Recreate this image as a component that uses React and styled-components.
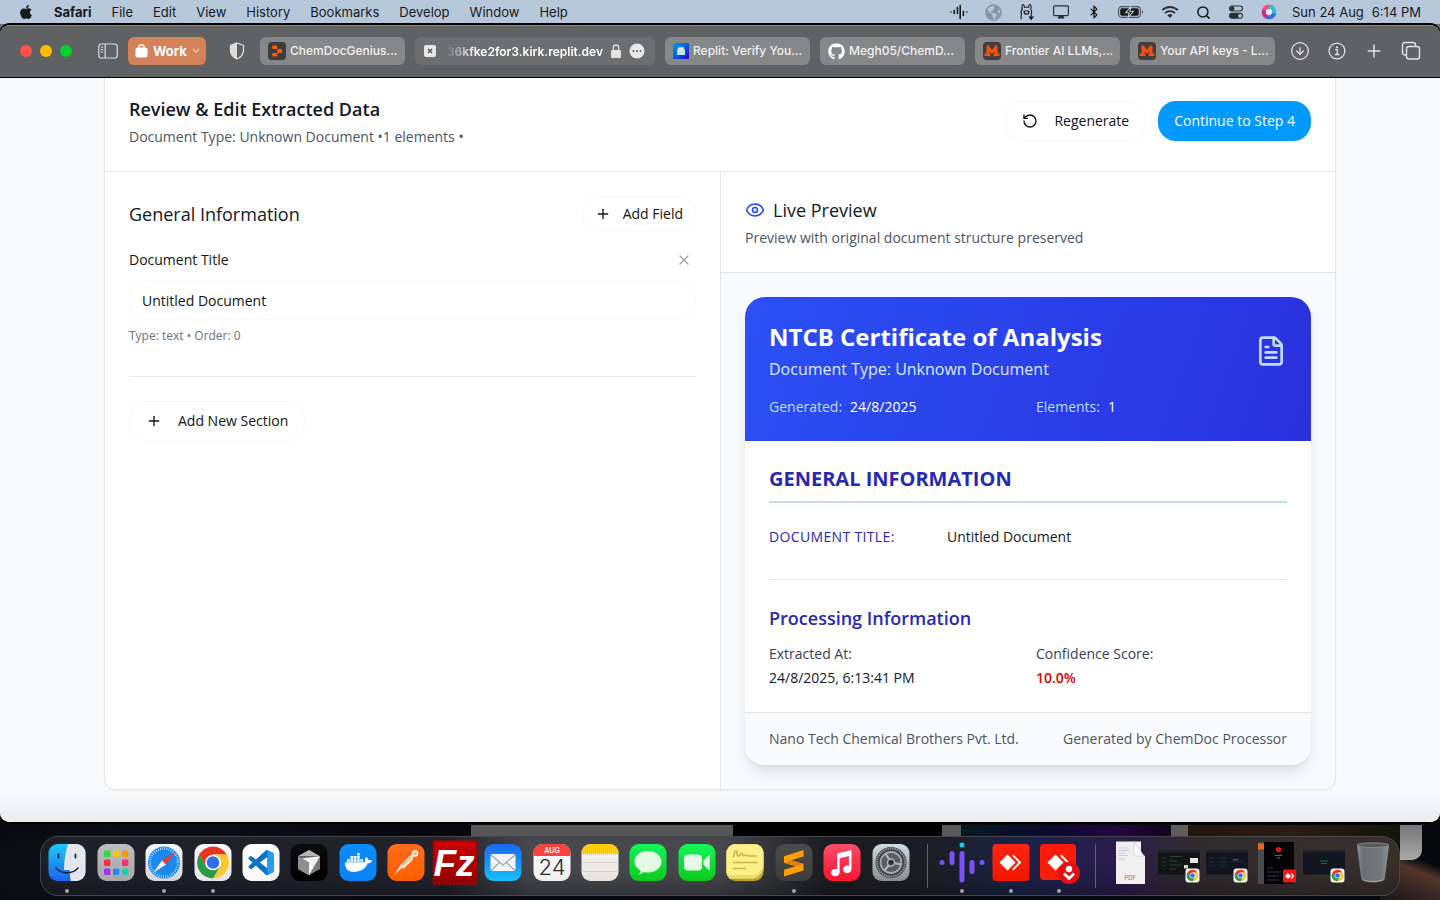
import React from "react";
import styled, { createGlobalStyle, css } from "styled-components";
import { Eye, FileText, Plus, RotateCcw, X, Search, CircleArrowDown, Bluetooth } from "lucide-react";
import { FaApple, FaDocker, FaGithub, FaGlobeAmericas } from "react-icons/fa";

const GlobalStyle = createGlobalStyle`
  *, *::before, *::after { box-sizing: border-box; }
  body { margin: 0; background: #07090f; font-family: "Open Sans", "Noto Sans", sans-serif; }
  h1, h2, h3, p, dl, dd, dt { margin: 0; }
  button, input { font: inherit; color: inherit; margin: 0; }
  button { background: none; border: 0; padding: 0; cursor: pointer; }
  svg { display: block; flex: none; }
`;

const systemFont = `Inter, "Liberation Sans", sans-serif`;

const medium = css`
  font-weight: 500;
  font-variation-settings: "wght" 500;
`;

/* ---------- desktop and menu bar ---------- */

const Desktop = styled.div`
  min-height: 100vh;
  display: flex;
  flex-direction: column;
  background: linear-gradient(#5d7284 0 50px, #07090f 50px);
`;

const MenuBar = styled.header`
  height: 24px;
  padding: 0 19px 0 18px;
  display: flex;
  align-items: center;
  justify-content: space-between;
  background: #b6c8da;
  color: #17191c;
  font-family: ${systemFont};
  font-size: 13px;
  line-height: 16px;
  white-space: nowrap;
`;

const Menus = styled.nav`
  display: flex;
  align-items: center;
  gap: 20px;
`;

const MenuItem = styled.button`
  font-weight: ${(p) => (p.$app ? 700 : 400)};
`;

const StatusItems = styled.div`
  display: flex;
  align-items: center;
  gap: 15px;
`;

const StatusIcons = styled.div`
  display: flex;
  align-items: center;
  gap: 17px;
`;

const Clock = styled.time`
  display: flex;
  gap: 8px;
`;

/* ---------- browser window ---------- */

const Window = styled.div`
  flex: 1 0 auto;
  display: flex;
  flex-direction: column;
  margin-bottom: 1px;
  border-top: 1px solid #000;
  border-bottom: 1px solid #000;
  border-radius: 10px;
  overflow: hidden;
  background: #f9fafb;
  box-shadow: 0 0 0 1px #000, 0 1px 0 #66686b;
`;

const Toolbar = styled.div`
  height: 53px;
  padding: 0 19px 0 20px;
  display: flex;
  align-items: center;
  background: #606163;
  border-bottom: 1px solid #000;
  box-shadow: inset 0 1px 0 #858688;
  font-family: ${systemFont};
  color: #f1f1f1;
`;

const Lights = styled.div`
  display: flex;
  gap: 8px;
  margin-right: 26px;
`;

const Light = styled.button`
  width: 12px;
  height: 12px;
  border-radius: 50%;
  background: ${(p) => p.$color};
`;

const ProfileButton = styled.button`
  display: flex;
  align-items: center;
  gap: 5px;
  width: 78px;
  height: 28px;
  margin: 0 23px 0 10px;
  padding: 0 4px 0 7px;
  border-radius: 6px;
  background: #d4825a;
  color: #fff;
  font-size: 13px;
  font-weight: 700;
  line-height: 16px;
`;

const Tabs = styled.div`
  flex: 1;
  min-width: 0;
  display: flex;
  gap: 10px;
  margin: 0 15px;
`;

const Tab = styled.button`
  flex: 145 1 145px;
  min-width: 0;
  height: 28px;
  padding: 0 8px;
  display: flex;
  align-items: center;
  gap: 4px;
  border-radius: 6px;
  background: #868789;
  font-size: 12px;
  font-weight: 500;
  line-height: 16px;
  white-space: nowrap;
  overflow: hidden;
`;

const Address = styled.label`
  flex: 240 1 240px;
  min-width: 0;
  height: 28px;
  padding: 0 10px 0 9px;
  display: flex;
  align-items: center;
  gap: 8px;
  border-radius: 6px;
  background: #6d6e70;
`;

const AddressInput = styled.input`
  flex: 1;
  min-width: 0;
  height: 20px;
  border: 0;
  padding: 0;
  outline: 0;
  background: none;
  color: #fff;
  font-size: 12px;
  font-weight: 600;
  text-align: right;
  mask-image: linear-gradient(90deg, transparent, #000 32px);
`;

const ToolbarActions = styled.div`
  display: flex;
  gap: 17px;
  color: #e3e3e4;
`;

/* ---------- page ---------- */

const Page = styled.main`
  flex: 1;
  padding: 0 24px 32px;
  background: linear-gradient(to top, #ececee, #f8fafc 32px);
`;

const Sheet = styled.div`
  max-width: 1232px;
  margin: 0 auto;
  border: 1px solid #e5e7eb;
  border-top: 0;
  border-radius: 0 0 12px 12px;
  overflow: hidden;
  background: #fff;
  box-shadow: 0 1px 2px rgba(0, 0, 0, 0.05);
`;

const SheetHeader = styled.div`
  display: flex;
  align-items: center;
  justify-content: space-between;
  padding: 17px 24px 24px;
  border-bottom: 1px solid #e5e7eb;
`;

const Heading = styled.h2`
  display: flex;
  align-items: center;
  gap: 8px;
  color: ${(p) => p.$color || "#111827"};
  font-size: 18px;
  line-height: 28px;
  ${medium}
  ${(p) => p.$strong && css`
    font-weight: 600;
    font-variation-settings: normal;
  `}
`;

const Muted = styled.p`
  margin-top: 4px;
  color: #4b5563;
  font-size: 14px;
  line-height: 20px;
`;

const Medium = styled.span`
  ${medium}
`;

const Actions = styled.div`
  display: flex;
  gap: 12px;
`;

const Button = styled.button`
  display: inline-flex;
  align-items: center;
  justify-content: center;
  gap: 16px;
  height: 40px;
  padding: 0 16px;
  border: 1px solid #f7f7f8;
  border-radius: 18px;
  background: #fff;
  color: #0f1419;
  font-size: 14px;
  line-height: 20px;
  white-space: nowrap;
  ${medium}
  ${(p) => p.$small && css`
    height: 36px;
    padding: 0 12px;
    gap: 12px;
  `}
  ${(p) => p.$primary && css`
    border: 0;
    background: #0099ff;
    color: #fff;
  `}
`;

const Columns = styled.div`
  display: grid;
  grid-template-columns: 1fr 1fr;
`;

const Editor = styled.section`
  padding: 24px;
`;

const Row = styled.div`
  display: flex;
  align-items: center;
  justify-content: space-between;
`;

const Field = styled.div`
  margin-top: 16px;
`;

const FieldLabel = styled.label`
  color: #0f1419;
  font-size: 14px;
  line-height: 20px;
  ${medium}
`;

const RemoveButton = styled.button`
  width: 24px;
  height: 24px;
  display: grid;
  place-items: center;
  color: #9ca3af;
`;

const TextInput = styled.input`
  display: block;
  width: 100%;
  height: 40px;
  margin: 8px 0;
  padding: 0 12px;
  border: 1px solid #f7f7f8;
  border-radius: 18px;
  background: #fff;
  color: #0f1419;
  font-size: 14px;
  line-height: 20px;
`;

const Hint = styled.p`
  color: #6b7280;
  font-size: 12px;
  line-height: 16px;
`;

const Rule = styled.hr`
  margin: 32px 0 24px;
  border: 0;
  border-top: 1px solid #e5e7eb;
`;

const Preview = styled.section`
  border-left: 1px solid #e5e7eb;
  background: #f9fafb;
`;

const PreviewHeader = styled.div`
  padding: 24px;
  border-bottom: 1px solid #e5e7eb;
  background: #fff;
`;

const Certificate = styled.article`
  margin: 24px;
  border-radius: 20px;
  overflow: hidden;
  background: #fff;
  font-size: 14px;
  line-height: 20px;
  box-shadow: 0 10px 15px -3px rgba(0, 0, 0, 0.1), 0 4px 6px -4px rgba(0, 0, 0, 0.1);
`;

const Hero = styled.header`
  padding: 24px;
  background: linear-gradient(110deg, #2b50f5, #2931dd);
  color: #fff;
`;

const HeroTitle = styled.h1`
  font-size: 24px;
  line-height: 32px;
  font-weight: 700;
`;

const HeroSubtitle = styled.p`
  margin-top: 4px;
  color: #dbeafe;
  font-size: 16px;
  line-height: 24px;
`;

const TwoColumns = styled.dl`
  display: grid;
  grid-template-columns: 1fr 1fr;
  gap: 16px;
  margin-top: ${(p) => p.$top}px;
`;

const HeroFact = styled.div`
  display: flex;
  gap: 8px;
  dt { color: #bfdbfe; }
`;

const CertificateBody = styled.div`
  padding: 24px;
`;

const SectionTitle = styled.h2`
  padding-bottom: 8px;
  border-bottom: 2px solid #bfdbfe;
  color: #2629b3;
  font-size: 20px;
  line-height: 28px;
  font-weight: 700;
  text-transform: uppercase;
`;

const DataRow = styled.dl`
  display: grid;
  grid-template-columns: repeat(3, 1fr);
  gap: 16px;
  margin-top: 24px;
  ${medium}
  dt { color: #2629b3; text-transform: uppercase; letter-spacing: 0.025em; white-space: nowrap; }
  dd { grid-column: span 2; color: #111827; }
`;

const InfoItem = styled.div`
  dt { color: #374151; ${medium} }
  dd {
    margin-top: 4px;
    color: ${(p) => (p.$alert ? "#e00000" : "#111827")};
    font-weight: ${(p) => (p.$alert ? 600 : 400)};
  }
`;

const CertificateFooter = styled.footer`
  display: flex;
  justify-content: space-between;
  padding: 16px 24px;
  border-top: 1px solid #e5e7eb;
  background: #f9fafb;
  color: #4b5563;
`;

/* ---------- dock ---------- */

const DockArea = styled.div`
  position: relative;
  padding: 12px 40px 4px;
  background:
    radial-gradient(ellipse 260px 60px at 12% 60%, #11161b, transparent),
    linear-gradient(200deg, transparent 0 40px, #53352c 52px, #1c1518 90px, transparent 130px) right / 60px 100% no-repeat,
    #06080e;
`;

const Behind = styled.div`
  position: absolute;
  inset: 1px 0 auto;
  height: 35px;
  display: flex;
  align-items: flex-start;
  padding: 0 18px 0 471px;
`;

const Slice = styled.span`
  flex: ${(p) => p.$w} 1 0;
  height: ${(p) => p.$h || 20}px;
  background: ${(p) => p.$bg};
  border-radius: ${(p) => (p.$h ? "0 0 10px 0" : "0")};
`;

const DockBar = styled.footer`
  position: relative;
  height: 60px;
  padding: 2px;
  display: flex;
  border: 1px solid #45474d;
  border-radius: 18px;
  background: linear-gradient(90deg, #1d2029 0, #20232a 30%, #46484d 36%, #46484d 50%, #1b1c20 58%, #1c1e25 66%, #19244a 72%, #2a1c4c 79%, #2f2b2d 85%, #3a302b 100%);
  box-shadow: inset 0 -24px 20px -16px rgba(12, 14, 20, 0.45);
`;

const DockSlot = styled.button`
  flex: 1;
  min-width: 0;
  display: flex;
  flex-direction: column;
  align-items: center;
`;

const RunningDot = styled.i`
  width: 4px;
  height: 4px;
  margin-top: 2px;
  border-radius: 50%;
  background: ${(p) => (p.$on ? "#a3a5aa" : "transparent")};
`;

const DockDivider = styled.span`
  width: 1px;
  height: 44px;
  margin: 5px 10px 0 12px;
  background: #62646a;
`;

/* ---------- small drawings ---------- */

const replitLogo = (
  <svg width="18" height="18" viewBox="0 0 18 18">
    <rect width="18" height="18" rx="4" fill="#3c3c3c" />
    <path d="M5 3.500h3.500a.8.8 0 0 1 .8.8v2.800H5a.8.8 0 0 1-.8-.8v-2a.8.8 0 0 1 .8-.8zM9.300 7.100h3.900a.9.9 0 0 1 .9.9v2a.9.9 0 0 1-.9.9H9.300zM5 10.900h4.300v2.800a.8.8 0 0 1-.8.8H5a.8.8 0 0 1-.8-.8v-2a.8.8 0 0 1 .8-.8z" fill="#ff5a00" />
  </svg>
);

const mistralLogo = (
  <svg width="18" height="18" viewBox="0 0 18 18">
    <rect width="18" height="18" rx="4" fill="#403e3d" />
    <path d="M3.500 3.500h3v2h1.500v2h2v-2h1.500v-2h3v8h2v2.500h-6v-2.500h1v-2h-1v1.500h-3v-1.500h-1v2h1v2.500h-6v-2.500h2z" fill="#fa500f" />
  </svg>
);

const mailLogo = (
  <svg width="16" height="16" viewBox="0 0 16 16">
    <defs>
      <linearGradient id="tabBlue" x1="0" y1="0" x2="1" y2="1">
        <stop stopColor="#009af5" /><stop offset="0.5" stopColor="#0060e6" /><stop offset="1" stopColor="#3300b8" />
      </linearGradient>
    </defs>
    <rect width="16" height="16" fill="url(#tabBlue)" />
    <path d="M4 7l1.500-3h5L12 7v5H4z" fill="#8fd4ec" />
    <path d="M5.500 8V4.800h5V8z" fill="#ffdcb5" />
    <path d="M4 8h8v4H4z" fill="#b5e5f2" />
  </svg>
);

const sidebarIcon = (
  <svg width="20" height="16" viewBox="0 0 20 16" fill="none" stroke="#dcdcdd" strokeWidth="1.200">
    <rect x="0.800" y="1" width="18.400" height="14" rx="2.500" />
    <path d="M7.200 1v14M2.800 4h2.400M2.800 6.500h2.400M2.800 9h2.400" />
  </svg>
);

const displayIcon = (
  <svg width="18" height="16" viewBox="0 0 18 16">
    <rect x="1.600" y="1.900" width="14.800" height="9.800" rx="1.200" fill="none" stroke="#2b3036" strokeWidth="1.200" />
    <path d="M6.500 12h5l1 2.500h-7z" fill="#2b3036" />
  </svg>
);

const wifiIcon = (
  <svg width="18" height="14" viewBox="0 0 18 14" fill="none" stroke="#2b3036" strokeWidth="1.900">
    <path d="M1.200 5.200a11 11 0 0 1 15.600 0M4 8.200a7 7 0 0 1 10 0" />
    <path d="M9 13l-2.600-2.700a3.600 3.600 0 0 1 5.200 0z" fill="#2b3036" stroke="none" />
  </svg>
);

const batteryIcon = (
  <svg width="26" height="12" viewBox="0 0 26 12">
    <rect x="0.600" y="0.600" width="21.800" height="10.800" rx="3.200" fill="none" stroke="#4c545d" strokeWidth="1.100" />
    <rect x="2.200" y="2.200" width="18.600" height="7.600" rx="1.800" fill="#17191c" />
    <path d="M24 4.200v3.600c1.600-.6 1.600-3 0-3.600z" fill="#4c545d" />
    <path d="M13 .4L7.800 6.700h3.400L10 11.600l5.400-6.300h-3.500z" fill="#17191c" stroke="#b6c8da" strokeWidth="1.100" />
  </svg>
);

const controlIcon = (
  <svg width="16" height="14" viewBox="0 0 16 14">
    <rect x="1.500" y="1" width="13" height="5" rx="2.500" fill="none" stroke="#2b3036" strokeWidth="1.200" />
    <circle cx="4.300" cy="3.500" r="2.200" fill="#2b3036" />
    <rect x="1" y="7.800" width="14" height="6" rx="3" fill="#2b3036" />
    <circle cx="12" cy="10.800" r="1.900" fill="#b6c8da" />
  </svg>
);

const siriIcon = (
  <svg width="16" height="16" viewBox="0 0 16 16">
    <circle cx="8" cy="8" r="7.200" fill="#5c3a93" />
    <path d="M8 .8a7.200 7.200 0 0 1 6.800 9.400L8 8z" fill="#2cc5cf" />
    <path d="M1.200 6A7.200 7.200 0 0 1 8 .8V8z" fill="#f0507e" />
    <path d="M14.800 10.200A7.200 7.200 0 0 1 5 14.500L8 8z" fill="#3172e0" />
    <path d="M1.200 6l6.800 2-3 6.500A7.200 7.200 0 0 1 1.200 6z" fill="#c72d8d" />
    <circle cx="8" cy="8" r="3.200" fill="#f4f3fa" opacity="0.9" />
  </svg>
);

const ollamaIcon = (
  <svg width="16" height="18" viewBox="0 0 16 18" fill="none" stroke="#17191c" strokeWidth="1.100" strokeLinecap="round">
    <path d="M3.200 6.300C2.700 4 3 1.500 4 1.500S5.300 3 5.300 4.300h4.400C9.700 3 10 1.500 11 1.500s1.300 2.500.8 4.800c1.200 1.200 1.200 2.700.6 4.200" />
    <path d="M3.200 6.300C1.800 7.500 1.800 9.300 2.600 10.800 1.800 12.500 1.800 14.500 2.300 16M4.700 8.500h.1M10.200 8.500h.1" />
    <ellipse cx="7.500" cy="9.400" rx="2.300" ry="1.700" />
    <path d="M12.200 11v4.500M10.400 14l1.800 2.300 1.800-2.300z" fill="#17191c" />
  </svg>
);

const waveIcon = (
  <svg width="18" height="16" viewBox="0 0 18 16" stroke="#17191c" strokeWidth="1.600" strokeLinecap="round">
    <path d="M1 8v.01M4.200 6.500v3M7.400 3.500v6M10.200 1.500v13M13.400 7.500v4M17 8v.01" />
  </svg>
);

function ChromeMark({ cx, cy, r }) {
  const arm = "M-8.660-5A10 10 0 0 1 8.660-5L0-5L-4.330 2.500Z";
  return (
    <g transform={`translate(${cx} ${cy}) scale(${r / 10})`}>
      <path d={arm} fill="#ea3323" />
      <path d={arm} fill="#fcc934" transform="rotate(120)" />
      <path d={arm} fill="#2a9a46" transform="rotate(240)" />
      <circle r="4.900" fill="#fff" />
      <circle r="3.900" fill="#2b70e8" />
    </g>
  );
}

/* Every dock tile is drawn on a 48px board with a 37px rounded square. */
function Tile({ id, from, to, rx = 9, children }) {
  return (
    <svg width="48" height="48" viewBox="0 0 48 48">
      <defs>
        <linearGradient id={id} x1="0" y1="0" x2="0" y2="1">
          <stop stopColor={from} /><stop offset="1" stopColor={to} />
        </linearGradient>
        <clipPath id={`${id}Clip`}><rect x="5.500" y="5" width="37" height="37" rx={rx} /></clipPath>
      </defs>
      <g clipPath={`url(#${id}Clip)`}>
        <rect x="5" y="5" width="38" height="38" fill={`url(#${id})`} />
        {children}
      </g>
    </svg>
  );
}

const finder = (
  <Tile id="finder" from="#1cc8fb" to="#1a62f2">
    <path d="M25 5h18v38H28c-1-5-1.400-9-1.300-12H21c0-10 1.500-18 4-26z" fill="#e2e6ee" />
    <path d="M15.500 15.500v3M32.500 15.500v3" stroke="#1d2634" strokeWidth="1.800" strokeLinecap="round" />
    <path d="M13 29c6 6.500 16 6.500 22 0" fill="none" stroke="#1d2634" strokeWidth="1.600" strokeLinecap="round" />
  </Tile>
);

const padColors = ["#2bdd3c", "#fdc60a", "#ff9500", "#f1303a", "#a9b0b6", "#fb2d6d", "#a830e8", "#2488ff", "#18cfae"];
const launchpad = (
  <Tile id="launchpad" from="#bdbdc1" to="#a6a6ab">
    {padColors.map((c, i) => (
      <rect key={c} x={12 + (i % 3) * 9} y={11.5 + Math.floor(i / 3) * 9} width="6.400" height="6.400" rx="1.500" fill={c} />
    ))}
  </Tile>
);

const safari = (
  <Tile id="safari" from="#f7f7f8" to="#d3d4d8">
    <circle cx="24" cy="23.500" r="16" fill="#1b88ee" />
    <circle cx="24" cy="23.500" r="14" fill="none" stroke="#d9ecff" strokeWidth="2.400" strokeDasharray="0.700 1.500" />
    <path d="M35 13L26 25.500 22 21.500z" fill="#f0372b" />
    <path d="M13 34l9-12.500 4 4z" fill="#f3f4f6" />
  </Tile>
);

const chrome = <Tile id="chrome" from="#fafafa" to="#e5e5e7"><ChromeMark cx={24} cy={23.5} r={16} /></Tile>;

const vscode = (
  <Tile id="vscode" from="#ffffff" to="#f8f8f8">
    <g transform="translate(11.500 11) scale(1.050)">
      <path d="M23.150 2.587L18.210.21a1.494 1.494 0 0 0-1.705.29l-9.460 8.630-4.120-3.128a.999.999 0 0 0-1.276.057L.327 7.261A1 1 0 0 0 .326 8.740L3.899 12 .326 15.260a1 1 0 0 0 .001 1.479L1.650 17.940a.999.999 0 0 0 1.276.057l4.120-3.128 9.460 8.630a1.492 1.492 0 0 0 1.704.290l4.942-2.377A1.500 1.500 0 0 0 24 20.060V3.939a1.500 1.500 0 0 0-.850-1.352zm-5.146 14.861L10.826 12l7.178-5.448v10.896z" fill="#0b72c4" />
      <path d="M18 0.150l5.150 2.437A1.500 1.500 0 0 1 24 3.940v16.120a1.500 1.500 0 0 1-.850 1.350L18 23.850z" fill="#2a9bea" />
    </g>
  </Tile>
);

const cursor = (
  <Tile id="cursor" from="#0b0b0b" to="#000000">
    <path d="M24 11l11 6.300v12.600L24 36.200l-11-6.300V17.300z" fill="#77787a" />
    <path d="M24 11l11 6.300H13z" fill="#b5b6b8" />
    <path d="M13 17.300h22L24 23.600z" fill="#5c5d60" />
    <path d="M13 17.300L24 23.600v12.600l-11-6.300z" fill="#8d8e91" />
    <path d="M35 17.300L24 36.200V23.600l-7-4.300z" fill="#f2f2f2" />
  </Tile>
);

const docker = <Tile id="docker" from="#0a8cff" to="#0a82f5"><FaDocker x="11" y="10" size="27" color="#fff" /></Tile>;

const postman = (
  <Tile id="postman" from="#ff6c1c" to="#ff5c00">
    <circle cx="33" cy="14.500" r="2.600" fill="#ffb58a" stroke="#fff" strokeWidth="1.300" />
    <path d="M31.500 17l-3-1L18 26.500l-5.500 9L20 29l1.800.8 8.700-8.800z" fill="#ffe4d3" />
    <path d="M19.500 27l9.500-8.500" stroke="#ff8a4d" strokeWidth="1" />
  </Tile>
);

const filezilla = (
  <svg width="48" height="48" viewBox="0 0 48 48">
    <defs>
      <linearGradient id="fz" x1="0" y1="0" x2="0" y2="1"><stop stopColor="#cf0000" /><stop offset="1" stopColor="#8e0000" /></linearGradient>
    </defs>
    <rect x="2.500" y="2" width="43" height="43" fill="url(#fz)" stroke="#b00000" strokeWidth="2" strokeDasharray="2 1.600" />
    <text x="23" y="37" fill="#fff" textAnchor="middle" fontFamily="Liberation Sans, sans-serif" fontWeight="700" fontStyle="italic" fontSize="37">Fz</text>
  </svg>
);

const mail = (
  <Tile id="mail" from="#1d66f2" to="#19c2fb">
    <rect x="11.500" y="15" width="25" height="17" rx="2" fill="#f1f3f5" />
    <path d="M12 16l12 10 12-10M12 31.500l9-8.500M36 31.500L27 23" fill="none" stroke="#9aa5b0" strokeWidth="1.100" />
  </Tile>
);

const calendar = (
  <Tile id="calendar" from="#ffffff" to="#efefef">
    <rect x="5" y="5" width="38" height="12" fill="#f9443d" />
    <text x="24" y="14" fill="#fff" textAnchor="middle" fontFamily={systemFont} fontWeight="600" fontSize="7">AUG</text>
    <text x="24" y="36" fill="#2b2b2b" textAnchor="middle" fontFamily={systemFont} fontWeight="300" fontSize="22">24</text>
  </Tile>
);

const notes = (
  <Tile id="notes" from="#f8f7f4" to="#e7e2dc">
    <rect x="5" y="5" width="38" height="9.500" fill="#fccb0a" />
    <path d="M5 15h38" stroke="#b8a878" strokeWidth="1" strokeDasharray="1 1" />
    <path d="M5 23.500h38M5 32.500h38" stroke="#cfcac5" strokeWidth="0.800" />
  </Tile>
);

const messages = (
  <Tile id="messages" from="#14f55a" to="#0cc81c">
    <path d="M24 12c7.600 0 13.500 4.700 13.500 10.800S31.600 33.600 24 33.600c-1.600 0-3.200-.2-4.600-.6-1.200 1.200-2.800 2-4.600 2.200 1.200-1 1.800-2.400 1.800-3.600-3.600-2-6.100-5.100-6.100-8.800C10.500 16.700 16.400 12 24 12z" fill="#e2f9e4" />
  </Tile>
);

const facetime = (
  <Tile id="facetime" from="#14f55a" to="#0cc81c">
    <rect x="11" y="15.500" width="18" height="16" rx="4" fill="#e6faea" />
    <path d="M30.500 21.500l5-5c.7-.5 1.200-.2 1.200.6v13c0 .8-.5 1.100-1.200.6l-5-5z" fill="#e6faea" />
  </Tile>
);

const stickies = (
  <Tile id="stickies" from="#e4cf48" to="#bfa526">
    <path d="M5 5h38v25c-2 5-6 9-11 10H5z" fill="#f1e272" stroke="#a8952c" strokeWidth="0.600" />
    <path d="M5 5h38v21c-1 6-6 11-12 11H5z" fill="#fbf089" stroke="#c4b043" strokeWidth="0.500" />
    <path d="M12.500 18c1-7 3.500-8 3.500-4s2 4 3.500 1 2 3 4 1.500 2 .5 3.500.5h8.500M12.500 23.500h23.500M12.500 29.500h12" fill="none" stroke="#cdb748" strokeWidth="1.600" strokeLinecap="round" />
  </Tile>
);

const sublime = (
  <Tile id="sublime" from="#4b4b4b" to="#3c3c3c">
    <path d="M33.500 11v6.600l-12 3.700 12 3.700v6.500L14 37.500v-6.800l11.500-3.500L14 23.800v-6.600z" fill="#ff9d0a" />
    <path d="M14 23.800l11.500 3.400 8-2.200-12-3.700z" fill="#e37f00" />
  </Tile>
);

const music = (
  <Tile id="music" from="#fb4e69" to="#fa1230">
    <path d="M19 14.500L33.500 11v19.500a4.300 3.700 0 1 1-2.600-3.600V17l-9.300 2.300v14.400a4.300 3.700 0 1 1-2.600-3.600z" fill="#fff" />
  </Tile>
);

const settings = (
  <Tile id="settings" from="#cddce4" to="#8b8a8a">
    <circle cx="24" cy="23.500" r="15.500" fill="#3d3f42" />
    <circle cx="24" cy="23.500" r="14" fill="none" stroke="#8f9396" strokeWidth="2" strokeDasharray="1.500 0.800" />
    <circle cx="24" cy="23.500" r="10.500" fill="#5a5d60" stroke="#a5a9ab" strokeWidth="1.800" />
    <path d="M24 23.500l10 2M24 23.500l-5.500-9M24 23.500l-6.500 8" stroke="#b3b7b9" strokeWidth="2.200" />
    <circle cx="24" cy="23.500" r="3.500" fill="#2f3133" stroke="#b3b7b9" strokeWidth="1.500" />
  </Tile>
);

const voice = (
  <svg width="48" height="48" viewBox="0 0 48 48" strokeWidth="5" strokeLinecap="round" stroke="#7d52f4">
    <path d="M4 23.500v.01M14 14.500v9M24 14.500v26.500M34 23.500v9M44 23.500v.01" />
    <path d="M24 6v.01" stroke="#13cfe0" />
  </svg>
);

const anydeskMark = (
  <g>
    <path d="M20.500 15.500l8 8-8 8-8-8z" fill="#fff" />
    <path d="M25.500 16.500l7 7-7 7" fill="none" stroke="#fff" strokeWidth="2.600" />
    <path d="M23.800 16.500l7 7-7 7" fill="none" stroke="#fb1c0a" strokeWidth="1.200" />
  </g>
);

const anydesk = <Tile id="anydesk" from="#ff2412" to="#f51500" rx={4}>{anydeskMark}</Tile>;

const anydeskDownload = (
  <svg width="48" height="48" viewBox="0 0 48 48">
    <rect x="5" y="5" width="36" height="36" rx="4" fill="#fb1c0a" />
    {anydeskMark}
    <circle cx="34" cy="34" r="11" fill="#e30f12" />
    <circle cx="34" cy="30" r="3.200" fill="#fff" />
    <path d="M29 34.500l5 5 5-5" fill="none" stroke="#fff" strokeWidth="2.800" />
  </svg>
);

const pdf = (
  <svg width="48" height="48" viewBox="0 0 48 48">
    <path d="M10 2.500h25v12l4 2.500v28H10z" fill="#f0f0f0" />
    <path d="M28 2.500L38 17h-8q-2 0-2-2z" fill="#fbfbfb" stroke="#c8c8ca" strokeWidth="0.600" />
    <path d="M12 9h10M12 11.500h12M12 14h8M12 16.500h10" stroke="#b9bcd6" strokeWidth="0.700" />
    <path d="M12 20h7" stroke="#e6a3a3" strokeWidth="0.700" />
    <text x="24" y="41" fill="#8d8d8f" textAnchor="middle" fontFamily={systemFont} fontWeight="500" fontSize="6">PDF</text>
  </svg>
);

function MiniWindow({ variant }) {
  return (
    <svg width="48" height="48" viewBox="0 0 48 48">
      <rect x="3" y="11.500" width="42" height="24" fill={variant === "page" ? "#111514" : "#10151f"} />
      <path d="M3 12.500h42" stroke="#20232a" strokeWidth="2" />
      {variant === "page" && (
        <g>
          <path d="M7 19h4M15 17.500h12M7 23h4M14 22h8M15 26h12M7 27h4M15 30h6" stroke="#333b39" />
          <rect x="35" y="19" width="8" height="5" fill="#e8e8e8" />
          <rect x="29" y="26" width="4" height="3.500" fill="#d8d8c8" />
        </g>
      )}
      {variant === "code" && <path d="M6 19h5M16 19h9M6 23h4M16 23h8M29 22h12M6 27h5M16 27h7" stroke="#29303d" />}
      {variant === "code" && <path d="M30 20.500h5" stroke="#1e7a46" strokeWidth="1.200" />}
      {variant === "centre" && <path d="M20 22h8M21 24.500h6" stroke="#1e6a40" strokeWidth="1.200" />}
      <rect x="30.500" y="29.500" width="14" height="14" rx="3" fill="#f5f5f5" />
      <ChromeMark cx={37.5} cy={36.5} r={5.8} />
    </svg>
  );
}

const phoneWindow = (
  <svg width="48" height="48" viewBox="0 0 48 48">
    <rect x="6" y="3" width="36" height="42" fill="#030303" />
    <rect x="6" y="3" width="6" height="42" fill="#4a4b4e" />
    <rect x="6" y="4.500" width="6" height="6" fill="#f0641e" />
    <circle cx="26.500" cy="10.500" r="2.600" fill="#e11" />
    <path d="M23 16.500h7M25 19h3" stroke="#6a6a6a" />
    <path d="M15 29h6M15 33h14M15 37h12M15 41h12" stroke="#2c3a52" />
    <rect x="31" y="30.500" width="13" height="13" rx="1" fill="#f01a10" />
    <path d="M36 34l3 3-3 3-3-3z" fill="#fff" /><path d="M39 34.500l2.500 2.500-2.500 2.500" fill="none" stroke="#fff" strokeWidth="1.200" />
  </svg>
);

const trash = (
  <svg width="48" height="48" viewBox="0 0 48 48">
    <defs>
      <linearGradient id="trashBody" x1="0" y1="0" x2="1" y2="0">
        <stop stopColor="#8b9094" /><stop offset="0.2" stopColor="#6a6f73" /><stop offset="0.75" stopColor="#73787c" /><stop offset="1" stopColor="#8e9397" />
      </linearGradient>
    </defs>
    <path d="M8 6.500l4.300 33.500c.6 4.600 22.800 4.600 23.400 0L40 6.500z" fill="url(#trashBody)" />
    <ellipse cx="24" cy="6.200" rx="16" ry="2.400" fill="#565b5f" stroke="#8f9498" strokeWidth="0.800" />
    <path d="M14 40.500c4 2.600 16 2.600 20 0" fill="none" stroke="#a7acb0" strokeWidth="0.900" />
  </svg>
);

const dockGroups = [
  [
    ["Finder", finder, true], ["Launchpad", launchpad], ["Safari", safari, true], ["Chrome", chrome, true],
    ["Visual Studio Code", vscode], ["Cursor", cursor], ["Docker", docker], ["Postman", postman],
    ["FileZilla", filezilla], ["Mail", mail], ["Calendar", calendar], ["Notes", notes], ["Messages", messages],
    ["FaceTime", facetime], ["Stickies", stickies], ["Sublime Text", sublime, true], ["Music", music], ["System Settings", settings],
  ],
  [["Voice", voice, true], ["AnyDesk", anydesk, true], ["AnyDesk Service", anydeskDownload, true]],
  [
    ["PDF document", pdf], ["Chrome window", <MiniWindow variant="page" />], ["Chrome code window", <MiniWindow variant="code" />],
    ["AnyDesk window", phoneWindow], ["Chrome start window", <MiniWindow variant="centre" />], ["Trash", trash],
  ],
];

const menuNames = ["File", "Edit", "View", "History", "Bookmarks", "Develop", "Window", "Help"];

export default function App() {
  return (
    <Desktop>
      <GlobalStyle />
      <MenuBar>
        <Menus>
          <FaApple size={16} />
          <MenuItem $app>Safari</MenuItem>
          {menuNames.map((name) => <MenuItem key={name}>{name}</MenuItem>)}
        </Menus>
        <StatusItems>
          <StatusIcons>
            {waveIcon}
            <FaGlobeAmericas size={17} color="#8796a5" />
            {ollamaIcon}
            {displayIcon}
            <Bluetooth size={14} strokeWidth={2.2} />
            {batteryIcon}
            {wifiIcon}
            <Search size={15} strokeWidth={2.4} />
            {controlIcon}
            {siriIcon}
          </StatusIcons>
          <Clock><span>Sun 24 Aug</span><span>6:14 PM</span></Clock>
        </StatusItems>
      </MenuBar>

      <Window>
        <Toolbar>
          <Lights>
            <Light aria-label="Close" $color="#ff5148" />
            <Light aria-label="Minimise" $color="#ffbd00" />
            <Light aria-label="Zoom" $color="#00d22e" />
          </Lights>
          {sidebarIcon}
          <ProfileButton>
            <svg width="13" height="14" viewBox="0 0 13 14">
              <rect x="0.500" y="3.500" width="12" height="10" rx="2" fill="#fff" />
              <path d="M4 4V2.500Q4 1 5.500 1h2Q9 1 9 2.500V4" fill="none" stroke="#fff" strokeWidth="1.300" />
            </svg>
            Work
            <svg width="8" height="6" viewBox="0 0 8 6"><path d="M1 1l3 3 3-3" fill="none" stroke="#efc7b3" strokeWidth="1.300" /></svg>
          </ProfileButton>
          <svg width="16" height="18" viewBox="0 0 16 18">
            <path d="M8 1l6.500 2.400v5.200c0 4-2.600 6.600-6.500 8.400-3.900-1.800-6.500-4.400-6.500-8.400V3.400z" fill="none" stroke="#dededf" strokeWidth="1.300" />
            <path d="M8 1v16C4.100 15.200 1.500 12.600 1.500 8.600V3.400z" fill="#dededf" />
          </svg>
          <Tabs>
            <Tab>{replitLogo}ChemDocGenius...</Tab>
            <Address>
              <svg width="12" height="12" viewBox="0 0 12 12">
                <rect width="12" height="12" rx="2" fill="#e6e6e7" />
                <path d="M4 4l4 4M8 4l-4 4" stroke="#5b5c5e" strokeWidth="1.600" />
              </svg>
              <AddressInput aria-label="Address" defaultValue="36kfke2for3.kirk.replit.dev" />
              <svg width="10" height="14" viewBox="0 0 10 14">
                <rect y="6" width="10" height="8" rx="1.500" fill="#e3e3e4" />
                <path d="M2.200 6V3.800a2.800 2.800 0 0 1 5.600 0V6" fill="none" stroke="#e3e3e4" strokeWidth="1.300" />
              </svg>
              <svg width="16" height="16" viewBox="0 0 16 16">
                <circle cx="8" cy="8" r="7.500" fill="#e9e9ea" />
                <path d="M4.500 8v.01M8 8v.01M11.500 8v.01" stroke="#5b5c5e" strokeWidth="2" strokeLinecap="round" />
              </svg>
            </Address>
            <Tab>{mailLogo}Replit: Verify You...</Tab>
            <Tab><FaGithub size={17} color="#fff" />Megh05/ChemD...</Tab>
            <Tab>{mistralLogo}Frontier AI LLMs,...</Tab>
            <Tab>{mistralLogo}Your API keys - L...</Tab>
          </Tabs>
          <ToolbarActions>
            <button aria-label="Downloads"><CircleArrowDown size={20} strokeWidth={1.5} /></button>
            <button aria-label="Page info">
              <svg width="20" height="20" viewBox="0 0 20 20" fill="none" stroke="currentColor" strokeWidth="1.300">
                <circle cx="10" cy="10" r="7.900" />
                <path d="M8.300 8.700H10.200V13.500M8 13.500h4.400" />
                <circle cx="10" cy="6.300" r="1.100" fill="currentColor" stroke="none" />
              </svg>
            </button>
            <button aria-label="New tab"><Plus size={20} strokeWidth={1.8} /></button>
            <button aria-label="Tab overview">
              <svg width="20" height="20" viewBox="0 0 20 20" fill="none" stroke="currentColor" strokeWidth="1.400">
                <rect x="5.500" y="5.500" width="13" height="12.500" rx="2.500" />
                <path d="M5.500 14H4a2.500 2.500 0 0 1-2.500-2.500V4A2.500 2.500 0 0 1 4 1.500h8A2.500 2.500 0 0 1 14.500 4v1.500" />
              </svg>
            </button>
          </ToolbarActions>
        </Toolbar>

        <Page>
          <Sheet>
            <SheetHeader>
              <div>
                <Heading $strong>Review &amp; Edit Extracted Data</Heading>
                <Muted>Document Type: <Medium>Unknown Document</Medium> •1 elements •</Muted>
              </div>
              <Actions>
                <Button><RotateCcw size={16} />Regenerate</Button>
                <Button $primary>Continue to Step 4</Button>
              </Actions>
            </SheetHeader>
            <Columns>
              <Editor>
                <Row>
                  <Heading>General Information</Heading>
                  <Button $small><Plus size={16} />Add Field</Button>
                </Row>
                <Field>
                  <Row>
                    <FieldLabel htmlFor="doc-title">Document Title</FieldLabel>
                    <RemoveButton aria-label="Remove field"><X size={16} /></RemoveButton>
                  </Row>
                  <TextInput id="doc-title" type="text" defaultValue="Untitled Document" />
                  <Hint>Type: text • Order: 0</Hint>
                </Field>
                <Rule />
                <Button><Plus size={16} />Add New Section</Button>
              </Editor>
              <Preview>
                <PreviewHeader>
                  <Heading><Eye size={20} color="#2b4ff0" />Live Preview</Heading>
                  <Muted>Preview with original document structure preserved</Muted>
                </PreviewHeader>
                <Certificate>
                  <Hero>
                    <Row>
                      <div>
                        <HeroTitle>NTCB Certificate of Analysis</HeroTitle>
                        <HeroSubtitle>Document Type: Unknown Document</HeroSubtitle>
                      </div>
                      <FileText size={32} color="#bfdbfe" />
                    </Row>
                    <TwoColumns $top={16}>
                      <HeroFact><dt>Generated:</dt><dd>24/8/2025</dd></HeroFact>
                      <HeroFact><dt>Elements:</dt><dd>1</dd></HeroFact>
                    </TwoColumns>
                  </Hero>
                  <CertificateBody>
                    <SectionTitle>General Information</SectionTitle>
                    <DataRow><dt>Document Title:</dt><dd>Untitled Document</dd></DataRow>
                    <Rule />
                    <Heading as="h3" $color="#2629b3" $strong>Processing Information</Heading>
                    <TwoColumns $top={12}>
                      <InfoItem><dt>Extracted At:</dt><dd>24/8/2025, 6:13:41 PM</dd></InfoItem>
                      <InfoItem $alert><dt>Confidence Score:</dt><dd>10.0%</dd></InfoItem>
                    </TwoColumns>
                  </CertificateBody>
                  <CertificateFooter>
                    <Medium>Nano Tech Chemical Brothers Pvt. Ltd.</Medium>
                    <span>Generated by ChemDoc Processor</span>
                  </CertificateFooter>
                </Certificate>
              </Preview>
            </Columns>
          </Sheet>
        </Page>
      </Window>

      <DockArea>
        <Behind>
          <Slice $w={262} $bg="#565656" />
          <Slice $w={209} $bg="#000" />
          <Slice $w={19} $bg="#5a5a5a" />
          <Slice $w={210} $bg="linear-gradient(90deg, #051a1f, #0d0833 45%, #23063f 75%, #12031c)" />
          <Slice $w={17} $bg="#5e5d5c" />
          <Slice $w={212} $bg="linear-gradient(90deg, #21150c, #2a1c10 50%, #131609)" />
          <Slice $w={22} $h={35} $bg="linear-gradient(#777, #a9a9a9)" />
        </Behind>
        <DockBar>
          {dockGroups.map((group, g) => (
            <React.Fragment key={g}>
              {g > 0 && <DockDivider />}
              {group.map(([name, icon, running]) => (
                <DockSlot key={name} aria-label={name}>
                  {icon}
                  <RunningDot $on={running} />
                </DockSlot>
              ))}
            </React.Fragment>
          ))}
        </DockBar>
      </DockArea>
    </Desktop>
  );
}
